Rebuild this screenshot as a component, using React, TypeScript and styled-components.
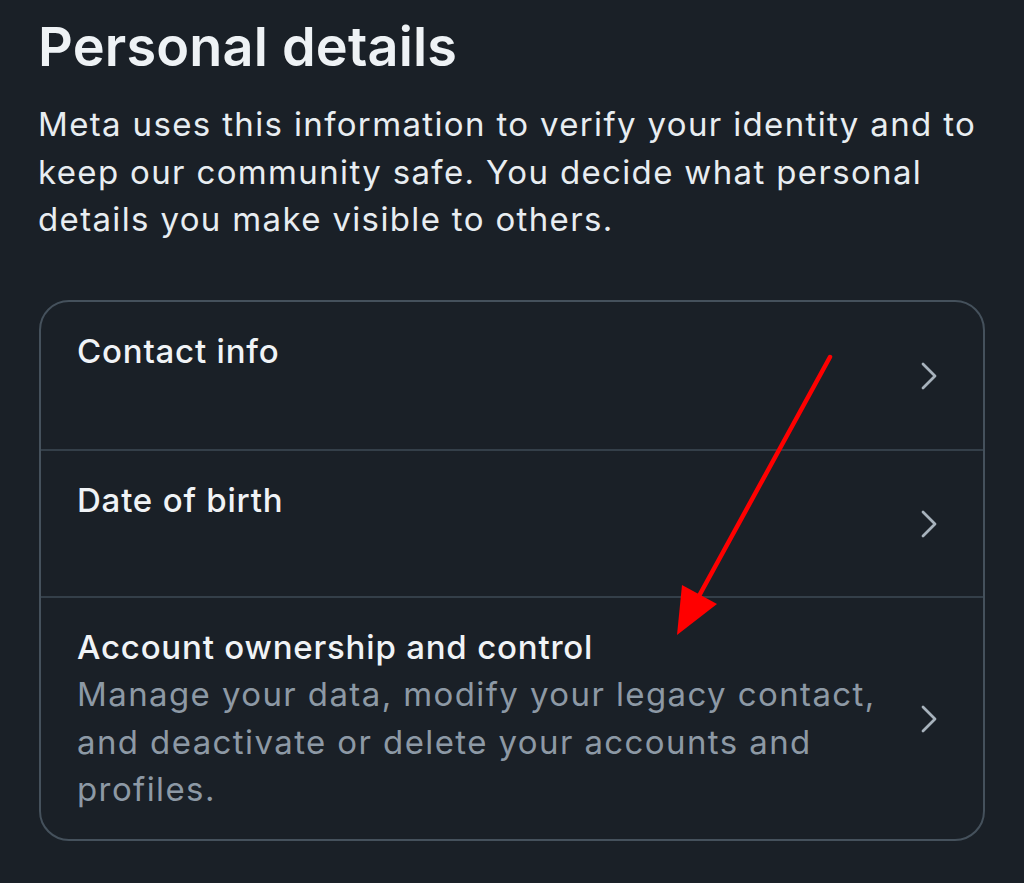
import React from 'react'
import styled, { createGlobalStyle } from 'styled-components'

const GlobalStyle = createGlobalStyle`
  html, body {
    margin: 0;
    padding: 0;
    background: #1a2027;
  }

  body {
    font-family: Inter, 'Noto Sans', 'Liberation Sans', sans-serif;
    color: #e8edf1;
    -webkit-font-smoothing: antialiased;
  }
`

interface DetailItem {
  title: string
  description?: string
}

const items: DetailItem[] = [
  { title: 'Contact info' },
  { title: 'Date of birth' },
  {
    title: 'Account ownership and control',
    description: 'Manage your data, modify your legacy contact, and deactivate or delete your accounts and profiles.'
  }
]

const ChevronRight = () => (
  <svg width='18' height='28' viewBox='0 0 18 28' fill='none' xmlns='http://www.w3.org/2000/svg'>
    <path d='M3 2L15 14L3 26' stroke='currentColor' strokeWidth='2.8' strokeLinecap='round' strokeLinejoin='round' />
  </svg>
)

const App: React.FC = () => {
  return (
    <>
      <GlobalStyle />
      <Page>
        <Title>Personal details</Title>
        <Intro>
          Meta uses this information to verify your identity and to keep our community safe. You decide what personal
          details you make visible to others.
        </Intro>

        <Card>
          {items.map(item => (
            <Row key={item.title}>
              <RowText>
                <RowTitle>{item.title}</RowTitle>
                {item.description && <RowDescription>{item.description}</RowDescription>}
              </RowText>
              <ChevronWrap>
                <ChevronRight />
              </ChevronWrap>
            </Row>
          ))}
        </Card>

        {/* red annotation arrow drawn over the list */}
        <Annotation width='1024' height='883' viewBox='0 0 1024 883' xmlns='http://www.w3.org/2000/svg'>
          <line x1='830' y1='357' x2='699' y2='596' stroke='#ff0000' strokeWidth='4.5' strokeLinecap='round' />
          <polygon points='677,635 682,585 717,604' fill='#ff0000' />
        </Annotation>
      </Page>
    </>
  )
}

const Page = styled.div`
  position: relative;
  width: 1024px;
  height: 883px;
  box-sizing: border-box;
  padding: 15px 39px 0 38px;
  overflow: hidden;
`

const Title = styled.h1`
  margin: 0;
  font-size: 54px;
  line-height: 64px;
  font-weight: 600;
  letter-spacing: 0.2px;
  color: #eef2f5;
`

const Intro = styled.p`
  margin: 22px -12px 0 0;
  font-size: 33px;
  line-height: 47.5px;
  font-weight: 400;
  letter-spacing: 1.35px;
  color: #e8edf1;
`

const Card = styled.div`
  margin-top: 56px;
  margin-left: 1px;
  border: 2px solid #45515c;
  border-radius: 30px;
  overflow: hidden;
`

const Row = styled.div`
  display: flex;
  align-items: center;
  gap: 24px;
  min-height: 147px;
  box-sizing: border-box;
  padding: 26px 45px 25px 36px;

  & + & {
    border-top: 2px solid #343f49;
  }
`

const RowText = styled.div`
  flex: 1;
  display: flex;
  flex-direction: column;
  align-self: flex-start;
`

const RowTitle = styled.div`
  font-size: 33px;
  line-height: 47.5px;
  font-weight: 500;
  letter-spacing: 0.8px;
  color: #f0f3f6;
`

const RowDescription = styled.div`
  font-size: 33px;
  line-height: 47.5px;
  font-weight: 400;
  letter-spacing: 1.4px;
  color: #8d99a5;
`

const ChevronWrap = styled.div`
  display: flex;
  align-items: center;
  color: #a7b2bc;
`

const Annotation = styled.svg`
  position: absolute;
  top: 0;
  left: 0;
  pointer-events: none;
`

export default App
